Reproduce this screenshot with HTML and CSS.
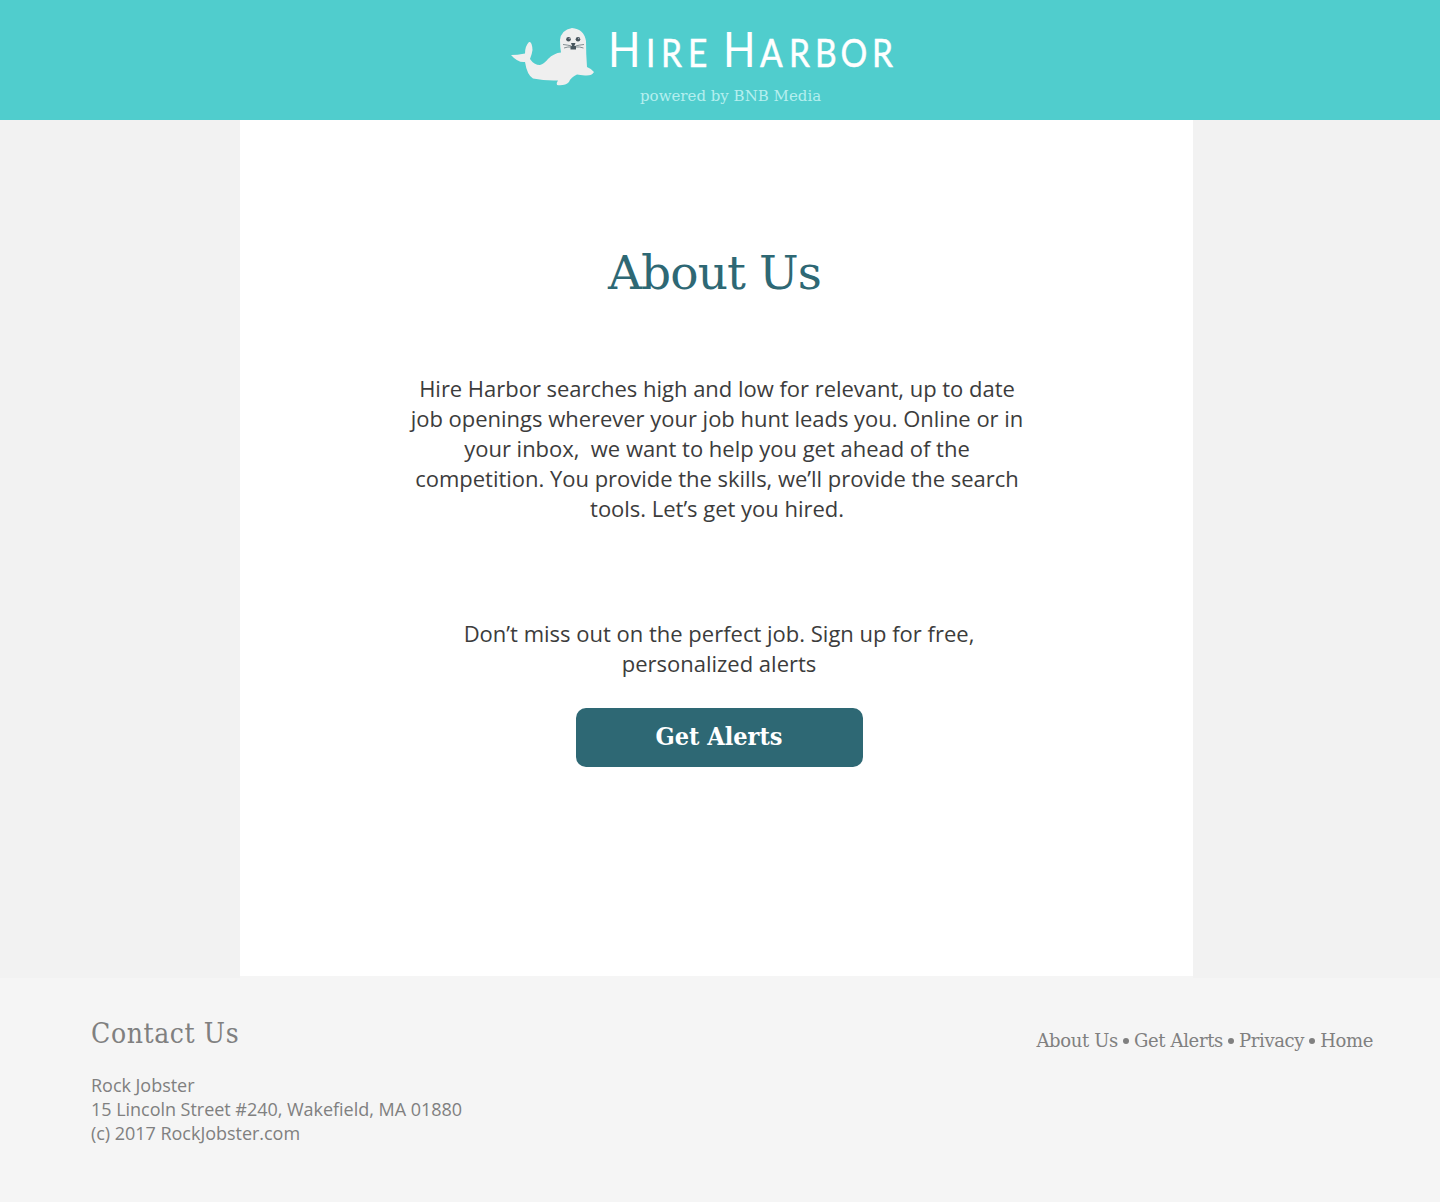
FILE: index.html
```html
<!DOCTYPE html>
<html lang="en">
<head>
<meta charset="utf-8">
<title>Hire Harbor – About Us</title>
<link rel="stylesheet" href="styles.css">
</head>
<body>
<header class="header">
  <div class="brand">
    <svg class="seal" width="84" height="58" viewBox="0 0 84 58" aria-hidden="true">
      <path fill="#efefef" d="M0 27Q6 27 14 25.500Q14 18 18 14Q21 13 21.500 22Q21 26 19 31Q23 37 29 37Q33 36 37 31Q43 25 50 24.500Q49 19 49 12Q50 2 61 0Q73 1 75 13Q75 26 76 39Q81 41 83 44Q81 48 74 47.500Q69 47 66 46.500Q60 49 58 54Q54 58 46 57Q45 55 47 52.500Q34 53 22 50.500Q16 47 14 34Q7 35 0 27Z"/>
      <g fill="#46545c">
        <circle cx="57.500" cy="11.300" r="2.300"/><circle cx="67" cy="11.300" r="2.300"/>
        <path d="M60 15h4.500l-1.200 3h1.700v3.500h-5.500v-3.500H61.200z"/>
      </g>
      <path d="M52 16.500q5 .5 8.500 1.500M53 20q4-1.500 7.500-1M73 16.500q-5 .5-8.500 1.500M72.500 20q-4-1.500-7.500-1" fill="none" stroke="#66757a" stroke-width=".8"/>
      <circle cx="58.200" cy="10.600" r=".7" fill="#bbc"/><circle cx="67.700" cy="10.600" r=".7" fill="#bbc"/>
    </svg>
    <svg class="wordmark" width="290" height="46" viewBox="0 0 290 46">
      <g transform="scale(.87 1)">
        <text y="39" x="0 43.700 60.900 92"><tspan class="cap">H</tspan>IRE</text>
        <text y="39" x="132.200 174.700 208 238 267.200 303.400"><tspan class="cap">H</tspan>ARBOR</text>
      </g>
    </svg>
  </div>
  <div class="tagline">powered by BNB Media</div>
</header>
<main class="panel">
  <h1 class="title">About Us</h1>
  <p class="copy intro">Hire Harbor searches high and low for relevant, up to date<br>job openings wherever your job hunt leads you. Online or in<br>your inbox,&nbsp; we want to help you get ahead of the<br>competition. You provide the skills, we’ll provide the search<br>tools. Let’s get you hired.</p>
  <p class="copy signup">Don’t miss out on the perfect job. Sign up for free,<br>personalized alerts</p>
  <a class="button">Get Alerts</a>
</main>
<footer class="footer">
  <section>
    <h2 class="contact-title">Contact Us</h2>
    <p class="address">Rock Jobster<br>15 Lincoln Street #240, Wakefield, MA 01880<br>(c) 2017 RockJobster.com</p>
  </section>
  <nav class="links"><a>About Us</a><i></i><a>Get Alerts</a><i></i><a>Privacy</a><i></i><a>Home</a></nav>
</footer>
</body>
</html>
```
FILE: styles.css
```css
* { box-sizing: border-box; margin: 0; padding: 0; }
body { background: #f2f2f2; color: #3c3c3c; font-family: "Open Sans", sans-serif; }
.header { height: 120px; background: #50cdcd; padding: 28px 0 0 511px; }
.brand { display: flex; height: 58px; }
.seal { display: block; flex: none; }
.wordmark { display: block; margin-left: 13px; flex: none; overflow: visible; font-family: Lato, sans-serif; font-size: 38.5px; fill: #fff; stroke: #fff; stroke-width: .5px; }
.cap { font-size: 49px; stroke-width: 0; }
.tagline { margin: 1px 0 0 129px; font: 15px/18px "DejaVu Serif", serif; color: #b5efef; white-space: nowrap; }
.panel { width: 953px; height: 858px; margin-left: 240px; padding-top: 121px; background: #fff; border-bottom: 2px solid #f5f5f5; display: flex; flex-direction: column; align-items: center; text-align: center; }
.title { font: 400 47px/64px "DejaVu Serif", serif; letter-spacing: -.9px; color: #2e6874; margin-right: 4px; }
.copy { font-size: 22px; line-height: 30px; white-space: nowrap; }
.intro { margin: 68px 0 0 1px; letter-spacing: -.02px; }
.signup { margin: 95px 0 0 5px; }
.button { width: 287px; height: 59px; margin: 30px 0 0 5px; border-radius: 10px; background: #2e6874; color: #fff; font: 700 25px/57px "DejaVu Serif Condensed", "DejaVu Serif", serif; font-stretch: semi-condensed; }
.footer { height: 224px; background: #f5f5f5; color: #808080; display: flex; justify-content: space-between; padding: 37px 67px 0 91px; }
.contact-title { font: 400 28px/38px "DejaVu Serif Condensed", "DejaVu Serif", serif; font-stretch: semi-condensed; letter-spacing: .6px; }
.address { margin-top: 20px; font-size: 18px; line-height: 24px; letter-spacing: -.03px; }
.links { display: flex; align-items: center; height: 24px; margin-top: 14px; gap: 5px; font: 18px/24px "DejaVu Serif", serif; letter-spacing: -.35px; }
.links i { width: 6px; height: 6px; border-radius: 50%; background: #808080; }
```
